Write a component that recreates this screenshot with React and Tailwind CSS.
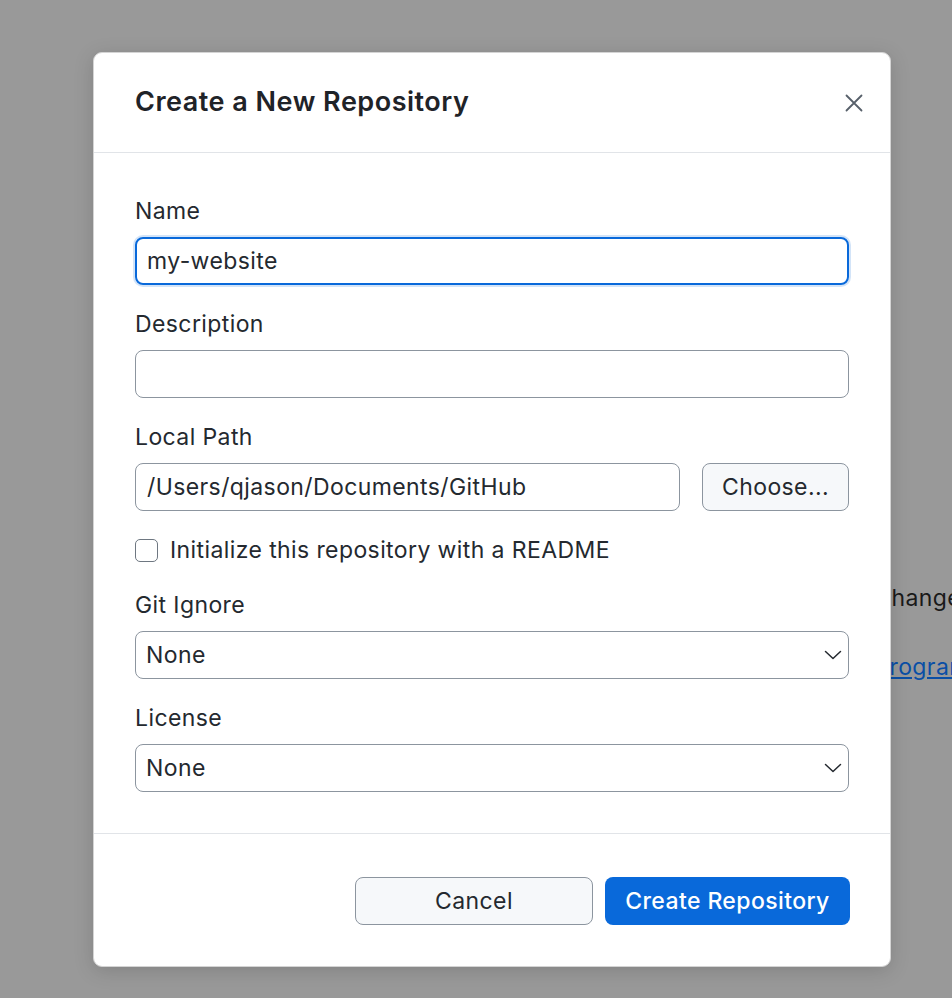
import { useState } from 'react'

function Chevron() {
  return (
    <svg width="18" height="10" viewBox="0 0 18 10" className="pointer-events-none absolute right-[7px] top-1/2 -translate-y-1/2">
      <polyline points="1.5,1.5 9,8.5 16.5,1.5" fill="none" stroke="#24292f" strokeWidth="1.5" strokeLinecap="round" strokeLinejoin="round" />
    </svg>
  )
}

function Field({ label, children }) {
  return (
    <div className="flex flex-col">
      <label className="mb-3 text-[23px] leading-[28px] tracking-[0.4px] text-[#24292f]">{label}</label>
      {children}
    </div>
  )
}

function Select({ value }) {
  return (
    <div className="relative">
      <select
        defaultValue={value}
        className="h-12 w-full appearance-none rounded-lg border border-[#8c959f] bg-white px-[10px] text-[23px] tracking-[0.4px] text-[#24292f] outline-none"
      >
        <option>None</option>
      </select>
      <Chevron />
    </div>
  )
}

export default function App() {
  const [name, setName] = useState('my-website')

  return (
    <div
      className="relative h-[998px] w-[952px] overflow-hidden bg-[#999999] text-[#24292f]"
      style={{ fontFamily: 'Inter, "Noto Sans", sans-serif' }}
    >
      {/* page behind the dialog */}
      <div className="flex flex-col pl-[878px] pt-[584px] text-[23px] tracking-[0.4px] whitespace-nowrap">
        <div className="leading-[28px] text-[#1a1a1a]">changes</div>
        <div className="-ml-[3px] mt-[41px] leading-[28px]">
          <a className="text-[#0a4fa6] underline">program</a>
        </div>
      </div>

      {/* dialog */}
      <div className="absolute left-[93px] top-[52px] flex w-[798px] flex-col rounded-[9px] border border-[#d4d4d4] bg-white shadow-[0_4px_20px_rgba(0,0,0,0.15)]">
        <div className="flex h-[100px] items-center justify-between border-b border-[#e1e4e8] pl-[41px] pr-[20px]">
          <h1 className="text-[27px] font-semibold tracking-[0.5px] text-[#1f2328]">Create a New Repository</h1>
          <button className="flex h-8 w-8 items-center justify-center">
            <svg width="18" height="18" viewBox="0 0 18 18">
              <path d="M1.5 1.5L16.5 16.5M16.5 1.5L1.5 16.5" stroke="#57606a" strokeWidth="1.8" strokeLinecap="round" />
            </svg>
          </button>
        </div>

        <div className="flex flex-col gap-[25px] px-[41px] pb-[41px] pt-[44px]">
          <Field label="Name">
            <input
              value={name}
              onChange={e => setName(e.target.value)}
              className="h-12 w-full rounded-lg border-2 border-[#0969da] px-[10px] text-[23px] tracking-[0.4px] text-[#24292f] shadow-[0_0_0_2px_rgba(9,105,218,0.18)] outline-none"
            />
          </Field>
          <Field label="Description">
            <input className="h-12 w-full rounded-lg border border-[#8c959f] px-[11px] text-[23px] outline-none" />
          </Field>
          <Field label="Local Path">
            <div className="flex gap-[22px]">
              <input
                defaultValue="/Users/qjason/Documents/GitHub"
                className="h-12 flex-1 rounded-lg border border-[#8c959f] px-[11px] text-[23px] tracking-[0.4px] text-[#24292f] outline-none"
              />
              <button className="h-12 w-[147px] rounded-lg border border-[#8c959f] bg-[#f6f8fa] text-[23px] tracking-[0.4px] text-[#24292f]">
                Choose...
              </button>
            </div>
          </Field>
          <label className="flex h-[28px] items-center gap-3">
            <span className="h-[23px] w-[23px] rounded-[5px] border-[1.5px] border-[#6e7781] bg-white" />
            <span className="text-[23px] leading-[28px] tracking-[0.4px]">Initialize this repository with a README</span>
          </label>
          <div className="mt-[2px]">
            <Field label="Git Ignore">
              <Select value="None" />
            </Field>
          </div>
          <Field label="License">
            <Select value="None" />
          </Field>
        </div>

        <div className="flex justify-end gap-3 border-t border-[#e1e4e8] px-[40px] pb-[41px] pt-[43px]">
          <button className="h-12 w-[238px] rounded-lg border border-[#8c959f] bg-[#f6f8fa] text-[23px] tracking-[0.4px] text-[#24292f]">
            Cancel
          </button>
          <button className="h-12 w-[245px] rounded-lg bg-[#0969da] text-[23px] font-medium tracking-[0.4px] text-white">
            Create Repository
          </button>
        </div>
      </div>
    </div>
  )
}
